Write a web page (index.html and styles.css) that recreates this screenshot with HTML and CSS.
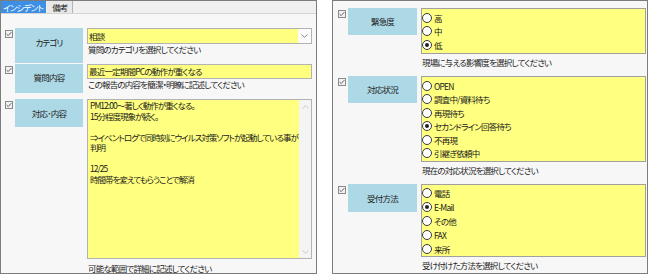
FILE: index.html
```html
<!DOCTYPE html>
<html lang="ja">
<head>
<meta charset="utf-8">
<title>インシデント</title>
<link rel="stylesheet" href="styles.css">
</head>
<body>
<div class="page">
  <section class="panel left">
    <div class="tabs">
      <span class="tab active">インシデント</span>
      <span class="tab">備考</span>
    </div>

    <div class="row r1">
      <span class="chk"><svg width="8" height="8" viewBox="0 0 8 8"><rect x="0.5" y="0.5" width="7" height="7" fill="#f2f2f2" stroke="#8a8a8a"/><path d="M1.6 4.1 L3.2 5.6 L6.4 2.1" fill="none" stroke="#555" stroke-width="0.9"/></svg></span>
      <div class="label lh35">カテゴリ</div>
      <div class="field">
        <div class="select">
          <span class="val">相談</span>
          <span class="btn"><svg width="7" height="4" viewBox="0 0 7 4"><path d="M0.5 0.5 L3.5 3.3 L6.5 0.5" fill="none" stroke="#777" stroke-width="0.9"/></svg></span>
        </div>
        <div class="help">質問のカテゴリを選択してください</div>
      </div>
    </div>

    <div class="row r2">
      <span class="chk"><svg width="8" height="8" viewBox="0 0 8 8"><rect x="0.5" y="0.5" width="7" height="7" fill="#f2f2f2" stroke="#8a8a8a"/><path d="M1.6 4.1 L3.2 5.6 L6.4 2.1" fill="none" stroke="#555" stroke-width="0.9"/></svg></span>
      <div class="label lh29">質問内容</div>
      <div class="field">
        <div class="input">最近一定期間PCの動作が重くなる</div>
        <div class="help">この報告の内容を簡潔・明瞭に記述してください</div>
      </div>
    </div>

    <div class="row r3">
      <span class="chk"><svg width="8" height="8" viewBox="0 0 8 8"><rect x="0.5" y="0.5" width="7" height="7" fill="#f2f2f2" stroke="#8a8a8a"/><path d="M1.6 4.1 L3.2 5.6 L6.4 2.1" fill="none" stroke="#555" stroke-width="0.9"/></svg></span>
      <div class="label lh28">対応･内容</div>
      <div class="field">
        <div class="textarea">
          <div class="ta-text">PM12:00～著しく動作が重くなる。<br>15分程度現象が続く。<br><br>⇒イベントログで同時刻にウイルス対策ソフトが起動している事が<br>判明<br><br>12/25<br>時間帯を変えてもらうことで解消</div>
          <div class="scroll">
            <svg width="7" height="4" viewBox="0 0 7 4"><path d="M0.5 3.5 L3.5 0.7 L6.5 3.5" fill="none" stroke="#c4c4c4" stroke-width="0.9"/></svg>
            <svg width="7" height="4" viewBox="0 0 7 4"><path d="M0.5 0.5 L3.5 3.3 L6.5 0.5" fill="none" stroke="#c4c4c4" stroke-width="0.9"/></svg>
          </div>
        </div>
        <div class="help ta-help">可能な範囲で詳細に記述してください</div>
      </div>
    </div>
  </section>

  <section class="panel right">
    <div class="row q1">
      <span class="chk"><svg width="8" height="8" viewBox="0 0 8 8"><rect x="0.5" y="0.5" width="7" height="7" fill="#f2f2f2" stroke="#8a8a8a"/><path d="M1.6 4.1 L3.2 5.6 L6.4 2.1" fill="none" stroke="#555" stroke-width="0.9"/></svg></span>
      <div class="label rl lh27">緊急度</div>
      <div class="field">
        <div class="opts h46">
          <div class="opt"><span class="radio"></span>高</div>
          <div class="opt"><span class="radio"></span>中</div>
          <div class="opt"><span class="radio on"></span>低</div>
        </div>
        <div class="help rhelp">現場に与える影響度を選択してください</div>
      </div>
    </div>

    <div class="row q2">
      <span class="chk"><svg width="8" height="8" viewBox="0 0 8 8"><rect x="0.5" y="0.5" width="7" height="7" fill="#f2f2f2" stroke="#8a8a8a"/><path d="M1.6 4.1 L3.2 5.6 L6.4 2.1" fill="none" stroke="#555" stroke-width="0.9"/></svg></span>
      <div class="label rl lh27">対応状況</div>
      <div class="field">
        <div class="opts h86">
          <div class="opt"><span class="radio"></span>OPEN</div>
          <div class="opt"><span class="radio"></span>調査中/資料待ち</div>
          <div class="opt"><span class="radio"></span>再現待ち</div>
          <div class="opt"><span class="radio on"></span>セカンドライン回答待ち</div>
          <div class="opt"><span class="radio"></span>不再現</div>
          <div class="opt"><span class="radio"></span>引継ぎ依頼中</div>
        </div>
        <div class="help rhelp">現在の対応状況を選択してください</div>
      </div>
    </div>

    <div class="row q3">
      <span class="chk"><svg width="8" height="8" viewBox="0 0 8 8"><rect x="0.5" y="0.5" width="7" height="7" fill="#f2f2f2" stroke="#8a8a8a"/><path d="M1.6 4.1 L3.2 5.6 L6.4 2.1" fill="none" stroke="#555" stroke-width="0.9"/></svg></span>
      <div class="label rl lh28">受付方法</div>
      <div class="field">
        <div class="opts h73 wide">
          <div class="opt"><span class="radio"></span>電話</div>
          <div class="opt"><span class="radio on"></span>E-Mail</div>
          <div class="opt"><span class="radio"></span>その他</div>
          <div class="opt"><span class="radio"></span>FAX</div>
          <div class="opt"><span class="radio"></span>来所</div>
        </div>
        <div class="help rhelp">受け付けた方法を選択してください</div>
      </div>
    </div>
  </section>
</div>
</body>
</html>
```
FILE: styles.css
```css
html, body {
  margin: 0;
  padding: 0;
  background: #ffffff;
}
body {
  font-family: "Noto Sans CJK JP", "Noto Sans", sans-serif;
  font-size: 8.5px;
  color: #1a1a1a;
  font-feature-settings: "palt" 1;
  letter-spacing: -0.8px;
}
.page {
  display: flex;
  gap: 15px;
  width: 650px;
  height: 275px;
}
.panel {
  box-sizing: border-box;
  height: 274px;
  border: 1px solid #7c7c7c;
  background: #f7f7f7;
}
.left { width: 317px; }
.right { width: 316px; padding-top: 7px; }

.tabs {
  display: flex;
  height: 12px;
  background: #f0f0f0;
  border-bottom: 1px solid #d4d4d4;
}
.tab {
  line-height: 12px;
  padding: 0 4px 0 5px;
  background: #e9e9e9;
  border-right: 1px solid #b4b4b4;
  color: #222;
  white-space: nowrap;
}
.tab.active {
  background: #3d8fe6;
  color: #ffffff;
  border-right: 1px solid #f0f0f0;
  padding: 0 3px 0 2px;
}

.row {
  display: flex;
  align-items: flex-start;
}
.chk {
  display: block;
  width: 8px;
  height: 8px;
  margin: 2px 2px 0 4px;
}
.chk svg { display: block; }
.label {
  box-sizing: border-box;
  width: 68px;
  background: #add8e6;
  text-align: center;
  line-height: 12px;
  padding-top: 8px;
  color: #222222;
}
.lh35 { height: 35px; }
.lh29 { height: 29px; padding-top: 7px; }
.lh28 { height: 28px; }
.lh27 { height: 27px; padding-top: 7px; }
.field {
  width: 225px;
  margin-left: 4px;
}
.r1 { margin-top: 14px; }
.r2 { margin-top: 1px; }
.r3 { margin-top: 6px; }

.select {
  box-sizing: border-box;
  height: 16px;
  display: flex;
  border: 1px solid #b3b3b3;
  background: #ffff80;
}
.val {
  flex: 1;
  line-height: 14px;
  padding-left: 1px;
}
.btn {
  width: 13px;
  background: #fbfbfb;
  display: flex;
  align-items: center;
  justify-content: center;
}
.input {
  box-sizing: border-box;
  height: 15px;
  border: 1px solid #b3b3b3;
  background: #ffff80;
  line-height: 13px;
  padding-left: 1px;
  white-space: nowrap;
  overflow: hidden;
}
.help {
  line-height: 11px;
  padding-left: 1px;
  white-space: nowrap;
  color: #222222;
}
.textarea {
  box-sizing: border-box;
  height: 160px;
  display: flex;
  border: 1px solid #b3b3b3;
  background: #ffff80;
}
.ta-text {
  flex: 1;
  padding: 0 1px 0 2px;
  line-height: 10.5px;
  letter-spacing: -0.98px;
  white-space: nowrap;
  overflow: hidden;
}
.scroll {
  width: 12px;
  background: #f4f4f4;
  display: flex;
  flex-direction: column;
  justify-content: space-between;
  align-items: center;
  padding: 5px 0 4px;
  box-sizing: border-box;
}
.scroll svg { display: block; }
.ta-help { margin-top: 4px; }

.right .chk { margin-left: 5px; }
.rl { width: 69px; }
.q2 { margin-top: 8px; }
.q3 { margin-top: 8px; }
.opts {
  box-sizing: border-box;
  border: 1px solid #a0a0a0;
  background: #ffff80;
  padding-top: 2px;
}
.h46 { height: 46px; }
.h86 { height: 86px; }
.h73 { height: 73px; padding-top: 1px; }
.opt {
  display: flex;
  align-items: center;
  height: 13.5px;
  white-space: nowrap;
}
.wide .opt { height: 14px; }
.radio {
  box-sizing: border-box;
  width: 10px;
  height: 10px;
  border-radius: 50%;
  border: 1px solid #3a3a3a;
  background: #ffffff;
  margin-right: 2px;
  display: flex;
  align-items: center;
  justify-content: center;
}
.radio.on::after {
  content: "";
  width: 4px;
  height: 4px;
  border-radius: 50%;
  background: #222222;
}
.rhelp {
  margin-top: 2px;
  line-height: 12px;
}
```
